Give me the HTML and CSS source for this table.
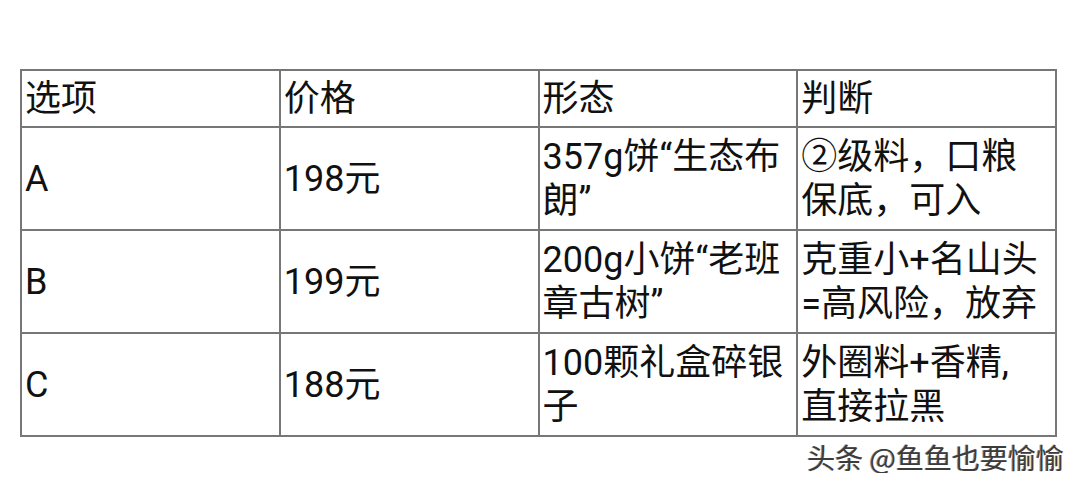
FILE: index.html
```html
<!DOCTYPE html>
<html lang="zh-CN">
<head>
<meta charset="utf-8">
<title>选项对比</title>
<link rel="stylesheet" href="styles.css">
</head>
<body>
<div class="page">
  <table class="grid">
    <colgroup>
      <col class="c"><col class="c"><col class="c"><col class="c">
    </colgroup>
    <thead>
      <tr class="head">
        <th>选项</th><th>价格</th><th>形态</th><th>判断</th>
      </tr>
    </thead>
    <tbody>
      <tr class="row">
        <td>A</td><td>198元</td><td>357g饼“生态布朗”</td><td>②级料，口粮保底，可入</td>
      </tr>
      <tr class="row">
        <td>B</td><td>199元</td><td>200g小饼“老班章古树”</td><td>克重小+名山头=高风险，放弃</td>
      </tr>
      <tr class="row">
        <td>C</td><td>188元</td><td>100颗礼盒碎银子</td><td>外圈料+香精,直接拉黑</td>
      </tr>
    </tbody>
  </table>
  <div class="mark">头条 @鱼鱼也要愉愉</div>
</div>
</body>
</html>
```

FILE: styles.css
```css
html, body {
  margin: 0;
  padding: 0;
  background: #ffffff;
}

.page {
  padding: 69px 0 0 20px;
  width: 1060px;
}

.grid {
  border-collapse: collapse;
  table-layout: fixed;
  width: 1037px;
  font-family: Roboto, "Noto Sans CJK SC", sans-serif;
  font-size: 36px;
  line-height: 44px;
  color: #111111;
}

.grid .c {
  width: 25%;
}

.grid th,
.grid td {
  border: 2px solid #777777;
  padding: 0 12px 0 3px;
  text-align: left;
  vertical-align: middle;
  font-weight: 400;
  word-break: break-all;
}

.head {
  height: 57px;
}

.row {
  height: 103px;
}

.mark {
  display: flex;
  justify-content: flex-end;
  margin-top: 4px;
  padding-right: 16px;
  font-family: "Noto Sans CJK SC", sans-serif;
  font-size: 28px;
  line-height: 32px;
  color: #3c3c3c;
  text-shadow: 1px 1px 0 #ffffff, -1px 0 0 #9a9a9a;
}
```
